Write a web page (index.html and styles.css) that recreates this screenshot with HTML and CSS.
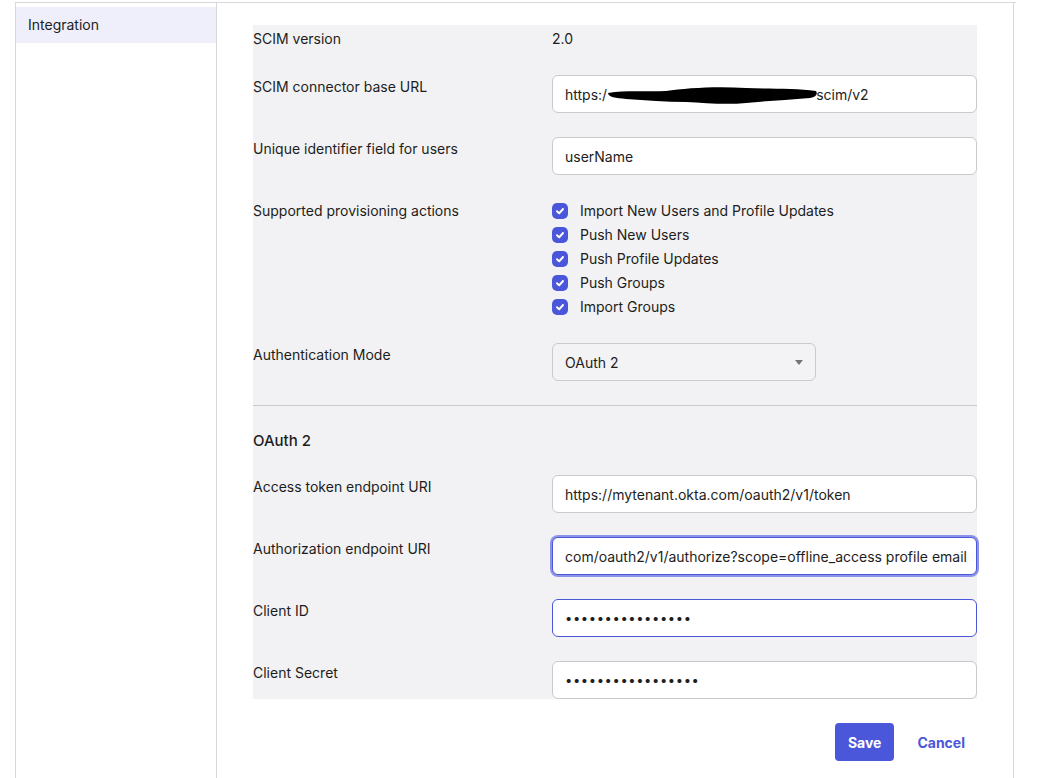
FILE: index.html
```html
<!DOCTYPE html>
<html lang="en">
<head>
    <meta charset="UTF-8">
    <title>Provisioning - Integration</title>
    <link rel="stylesheet" href="styles.css">
</head>
<body>

    <div class="page">
        <!-- Side navigation -->
        <div class="sidebar">
            <div class="nav-item active">Integration</div>
        </div>

        <div class="main">
            <form class="settings">
                <div class="row static">
                    <div class="label">SCIM version</div>
                    <div class="value">2.0</div>
                </div>

                <div class="row">
                    <label class="label" for="baseUrl">SCIM connector base URL</label>
                    <div class="field" id="baseUrl">https:/<svg class="redact" width="212" height="22" viewBox="0 0 212 22"><path d="M2 9 C20 6 40 8 60 7 C80 4 110 2 140 4 C165 5 190 4 210 7 C212 10 210 13 204 14 C180 16 160 17 140 19 C120 21 100 19 80 18 C60 18 40 16 20 15 C10 14 2 13 2 9 Z" fill="#000"/></svg>scim/v2</div>
                </div>

                <div class="row">
                    <label class="label" for="uidField">Unique identifier field for users</label>
                    <input class="input" id="uidField" type="text" value="userName">
                </div>

                <div class="row">
                    <div class="label">Supported provisioning actions</div>
                    <div class="checks">
                        <label class="check"><span class="box"><svg width="10" height="10" viewBox="0 0 10 10"><path d="M2 5.2 L4.2 7.3 L8 3" /></svg></span>Import New Users and Profile Updates</label>
                        <label class="check"><span class="box"><svg width="10" height="10" viewBox="0 0 10 10"><path d="M2 5.2 L4.2 7.3 L8 3" /></svg></span>Push New Users</label>
                        <label class="check"><span class="box"><svg width="10" height="10" viewBox="0 0 10 10"><path d="M2 5.2 L4.2 7.3 L8 3" /></svg></span>Push Profile Updates</label>
                        <label class="check"><span class="box"><svg width="10" height="10" viewBox="0 0 10 10"><path d="M2 5.2 L4.2 7.3 L8 3" /></svg></span>Push Groups</label>
                        <label class="check"><span class="box"><svg width="10" height="10" viewBox="0 0 10 10"><path d="M2 5.2 L4.2 7.3 L8 3" /></svg></span>Import Groups</label>
                    </div>
                </div>

                <div class="row">
                    <label class="label" for="authMode">Authentication Mode</label>
                    <div class="select" id="authMode">OAuth 2<span class="caret"></span></div>
                </div>

                <hr class="divider">

                <h3 class="section-title">OAuth 2</h3>

                <div class="row">
                    <label class="label" for="tokenUri">Access token endpoint URI</label>
                    <input class="input" id="tokenUri" type="text" value="https://mytenant.okta.com/oauth2/v1/token">
                </div>

                <div class="row">
                    <label class="label" for="authUri">Authorization endpoint URI</label>
                    <div class="field focused" id="authUri">com/oauth2/v1/authorize?scope=offline_access profile email</div>
                </div>

                <div class="row">
                    <label class="label" for="clientId">Client ID</label>
                    <input class="input active-border" id="clientId" type="password" value="xxxxxxxxxxxxxxxx">
                </div>

                <div class="row">
                    <label class="label" for="clientSecret">Client Secret</label>
                    <input class="input" id="clientSecret" type="password" value="xxxxxxxxxxxxxxxxx">
                </div>
            </form>

            <div class="actions">
                <button class="btn-primary" type="button">Save</button>
                <button class="btn-link" type="button">Cancel</button>
            </div>
        </div>
    </div>

</body>
</html>
```

FILE: styles.css
```css
body {
    margin: 0;
    font-family: Inter, "Noto Sans", Arial, sans-serif;
    font-size: 14px;
    color: #1d1d21;
    background: #fff;
}

.page {
    display: flex;
    margin-top: 2px;
    margin-left: 15px;
    width: 1000px;
    min-height: 776px;
    border-top: 1px solid #d7d7dc;
    border-left: 1px solid #d7d7dc;
}

.sidebar {
    width: 200px;
    padding-top: 4px;
    border-right: 1px solid #d7d7dc;
}

.nav-item {
    height: 36px;
    line-height: 36px;
    padding-left: 12px;
    box-sizing: border-box;
}

.nav-item.active {
    background: #eeeffb;
}

.main {
    width: 797px;
    padding: 22px 36px 0 36px;
    box-sizing: border-box;
    border-right: 1px solid #d7d7dc;
}

.settings {
    background: #f2f2f4;
    padding-top: 4px;
    display: flex;
    flex-direction: column;
    gap: 24px;
}

.row {
    display: grid;
    grid-template-columns: 299px 425px;
    align-items: start;
}

.label {
    padding-top: 2px;
    line-height: 20px;
}

.value {
    line-height: 20px;
}

.row.static .label {
    padding-top: 0;
    padding-bottom: 2px;
}

.input,
.field,
.select {
    height: 38px;
    box-sizing: border-box;
    border: 1px solid #c9c9ce;
    border-radius: 6px;
    background: #fff;
    padding: 0 12px;
    font-family: inherit;
    font-size: 14px;
    color: #1d1d21;
    width: 100%;
    margin: 0;
    outline: none;
}

.field {
    display: flex;
    align-items: center;
    white-space: nowrap;
    overflow: hidden;
}

.redact {
    margin: 2px -2px 0 -1px;
}

.field.focused {
    border-color: #4b57da;
    box-shadow: 0 0 0 2px #8c93e8;
    padding-right: 10px;
}

.input.active-border {
    border-color: #4b57da;
}

input[type="password"] {
    letter-spacing: 0.6px;
    font-size: 13px;
}

.checks {
    display: flex;
    flex-direction: column;
}

.check {
    display: flex;
    align-items: center;
    height: 24px;
    line-height: 22px;
}

.box {
    width: 16px;
    height: 16px;
    border-radius: 5px;
    background: #4b57da;
    display: flex;
    align-items: center;
    justify-content: center;
    margin-right: 12px;
}

.box path {
    fill: none;
    stroke: #fff;
    stroke-width: 2;
    stroke-linecap: round;
    stroke-linejoin: round;
}

.select {
    width: 264px;
    display: flex;
    align-items: center;
    justify-content: space-between;
    background: #f3f3f5;
}

.caret {
    width: 0;
    height: 0;
    border-left: 4px solid transparent;
    border-right: 4px solid transparent;
    border-top: 5px solid #74747a;
}

.divider {
    border: none;
    border-top: 1px solid #c9c9ce;
    margin: 0;
}

.section-title {
    margin: 0;
    font-size: 15px;
    font-weight: 500;
    line-height: 21px;
}

.actions {
    display: flex;
    justify-content: flex-end;
    gap: 11px;
    margin-top: 24px;
}

.btn-primary {
    height: 38px;
    padding: 0 13px;
    background: #4b57da;
    color: #fff;
    border: none;
    border-radius: 4px;
    font-family: inherit;
    font-size: 14px;
    font-weight: 700;
}

.btn-link {
    height: 38px;
    padding: 0 12px;
    background: none;
    border: none;
    color: #4b57da;
    font-family: inherit;
    font-size: 14px;
    font-weight: 700;
}
```
